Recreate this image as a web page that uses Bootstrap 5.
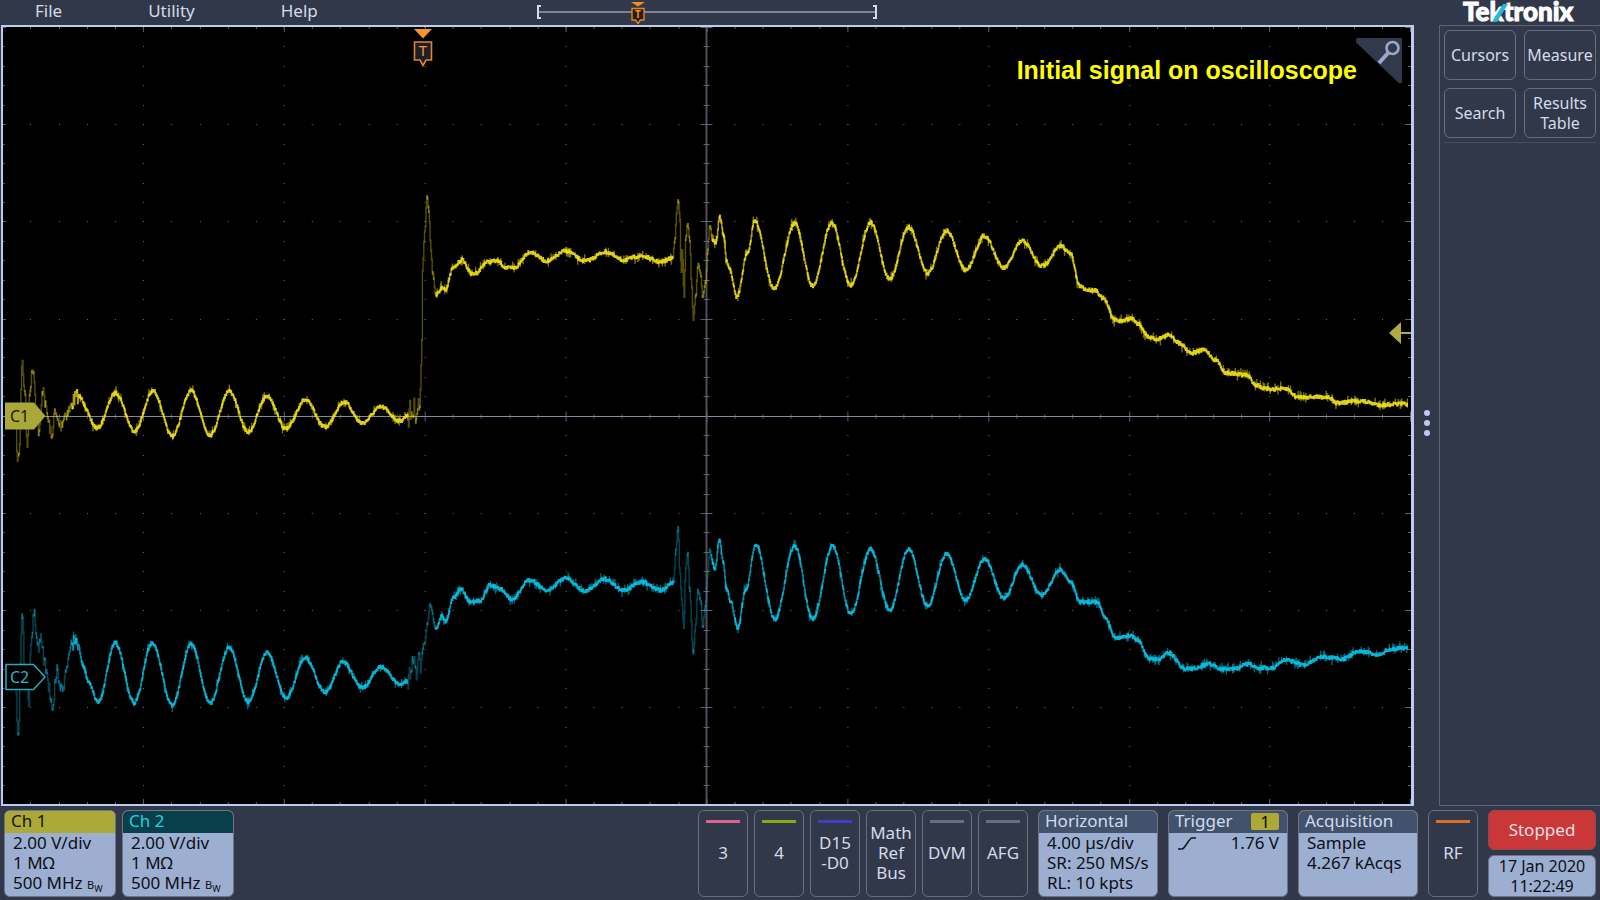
<!DOCTYPE html>
<html lang="en">
<head>
<meta charset="utf-8">
<meta name="viewport" content="width=device-width, initial-scale=1">
<title>Tektronix oscilloscope</title>
<link href="https://cdn.jsdelivr.net/npm/bootstrap@5.3.0/dist/css/bootstrap.min.css" rel="stylesheet">
<style>
  :root { --panel:#31384a; --line:#5d6473; --ink:#d3dbea; --frame:#bccaec; --face:#9dafd0; --head:#43526c; --olive:#aca938; }
  body { background:var(--panel); color:var(--ink); font-family:"Noto Sans","Open Sans",sans-serif; font-size:17px; line-height:20px; }
  button { font:inherit; color:inherit; background:none; border:0; padding:0; }
  .menu-bar { height:25px; }
  .menu-bar button { font-size:17px; line-height:22px; }
  .menus { flex:1 1 0; gap:86px; }
  .menus button:first-child { margin-left:35px; }
  .record-view { width:24%; }
  .record-line { height:2px; margin-top:11px; background:#7d8498; }
  .bracket { top:5px; width:4px; height:14px; border:1px solid var(--ink); border-width:2px 0 2px 2px; }
  .bracket.last { border-width:2px 2px 2px 0; }
  .scope { background:#000; border:2px solid var(--frame); border-right-width:3px; margin-left:1px; }
  .trace-title { right:54px; top:27px; color:#ff0; font:bold 25px/32px "Liberation Sans",Arial,sans-serif; }
  .zoom-corner { right:8px; top:11px; }
  .over { position:absolute; }
  .center-x { transform:translateX(-50%); }
  .center-y { transform:translateY(-50%); }
  .splitter { width:25px; padding-top:40px; }
  .splitter i { width:6px; height:6px; border-radius:50%; background:#bccbee; }
  .side { width:161px; }
  .logo { height:25px; padding-left:24px; color:#fff; font:900 26px/23px Lato,"Open Sans",sans-serif; -webkit-text-stroke:1px #fff; }
  .side-panel { border:solid var(--line); border-width:1px 0 1px 1px; padding:4px 4px 0; }
  .side-grid { display:grid; grid-template-columns:1fr 1fr; gap:8px; padding-bottom:4px; border-bottom:1px solid #454c5c; }
  .tile { border:1px solid #686e7b; border-radius:6px; }
  .side-grid .tile { height:50px; font-size:16px; line-height:20px; }
  .footer-bar { gap:10px; padding:4px 4px 3px; height:94px; }
  .slot { width:50px; position:relative; padding-bottom:2px; white-space:nowrap; }
  .slot::before { content:""; position:absolute; left:7px; right:7px; top:9px; height:3px; background:var(--mark); }
  .readout { width:120px; background:var(--face); border:1px solid #6d7584; border-radius:6px; color:#0b1018; text-align:left; display:flex; flex-direction:column; overflow:hidden; white-space:nowrap; }
  .channel { width:112px; }
  .readout .title { height:22px; line-height:20px; padding:0 6px; background:var(--head); color:var(--ink); align-self:stretch; }
  .readout .lines { padding:0 8px; align-self:stretch; }
  .bw { font-size:11px; } .bw small { font-size:9px; position:relative; top:3px; }
  .src { width:28px; height:17px; line-height:17px; margin:2px 2px 0 0; text-align:center; background:var(--olive); color:#0b1018; border-radius:2px; }
  .run-state { height:40px; background:#c93739; border:1px solid #8d4a55; border-radius:6px; color:#f1dfe4; }
  .clock { height:42px; background:var(--face); border:1px solid #6d7584; border-radius:6px; color:#0b1018; text-align:center; line-height:20px; font-size:16px; }
  .status { width:108px; gap:5px; }
</style>
</head>
<body class="vh-100 d-flex flex-column overflow-hidden">
<div class="d-flex flex-fill" style="min-height:0">
  <main class="d-flex flex-column flex-fill">
    <header class="menu-bar d-flex">
      <nav class="menus d-flex align-items-start" aria-label="Main menu">
        <button type="button">File</button><button type="button">Utility</button><button type="button">Help</button>
      </nav>
      <div class="record-view position-relative">
        <div class="record-line"></div>
        <span class="over bracket start-0"></span><span class="over bracket last end-0"></span>
        <svg class="over center-x" style="left:29.7%;top:2px" width="14" height="22" viewBox="0 0 14 22" fill="none">
          <path d="M0 0H14L7 4.500Z" fill="#f68b1f"/><path d="M1 6.500H13V18H9.500L7 21.500 4.500 18H1Z" fill="#2b1c10" stroke="#e5851f" stroke-width="1.400"/>
          <text x="7" y="16" text-anchor="middle" font-size="10" font-weight="bold" fill="#e5902f">T</text>
        </svg>
      </div>
      <div style="flex:1 1 0"></div>
    </header>
    <section class="scope flex-fill position-relative" aria-label="Waveform view">
      <svg id="plot" class="over w-100 h-100" viewBox="3 27 1409 777" preserveAspectRatio="none" fill="none"></svg>
      <svg class="over center-x" style="left:29.8%;top:2px" width="20" height="40" viewBox="0 0 20 40" fill="none">
        <path d="M1 0H19L10 9.500Z" fill="#f9922b"/>
        <path d="M1.500 13H18.500V31H13L10 36.500 7 31H1.500Z" fill="#1d1e26" stroke="#df8530" stroke-width="1.600"/>
        <text x="10" y="27" text-anchor="middle" font-size="15" fill="#ee9440">T</text>
      </svg>
      <h1 class="over trace-title m-0">Initial signal on oscilloscope</h1>
      <button type="button" class="over zoom-corner" aria-label="Zoom">
        <svg class="d-block" width="47" height="46" viewBox="0 0 47 46" fill="none">
          <path d="M2 1H45V44Q43 45 41 42L1 4Q0 1 2 1Z" fill="#31394b" stroke="#31394b" stroke-width="2"/>
          <circle cx="36.500" cy="10" r="6" stroke="#9aa9cb" stroke-width="2.600"/><path d="M32 15L23 25" stroke="#9aa9cb" stroke-width="4"/>
        </svg>
      </button>
      <svg class="over center-y" style="left:2px;top:50.1%" width="42" height="28" viewBox="0 0 42 28"><path d="M0 .500H29L40.500 14 29 27.500H0Z" fill="#aba83a"/><text x="5" y="20" font-size="16" fill="#1a1a08">C1</text></svg>
      <svg class="over center-y" style="left:2px;top:83.7%" width="42" height="28" viewBox="0 0 42 28"><path d="M1 1.500H28.500L40 14 28.500 26.500H1Z" fill="#000" stroke="#2aa9b6" stroke-width="1.500"/><text x="5" y="20" font-size="16" fill="#2cb5c4">C2</text></svg>
      <svg class="over center-y end-0" style="top:39.4%" width="22" height="22" viewBox="0 0 22 22"><path d="M0 11L12 0V10H22V12H12V22Z" fill="#b0ab3e"/></svg>
    </section>
  </main>
  <div class="splitter d-flex flex-column align-items-center justify-content-center gap-1" aria-hidden="true"><i></i><i></i><i></i></div>
  <aside class="side d-flex flex-column">
    <div class="logo position-relative">Tektronix
      <svg class="over" style="left:53px;top:1px" width="18" height="22" viewBox="0 0 18 22"><path d="M0 21L11 3H16L5 21Z" fill="#27b5d8"/></svg>
    </div>
    <div class="side-panel flex-fill">
      <div class="side-grid">
        <button type="button" class="tile">Cursors</button><button type="button" class="tile">Measure</button>
        <button type="button" class="tile">Search</button><button type="button" class="tile">Results<br>Table</button>
      </div>
    </div>
  </aside>
</div>
<footer class="footer-bar d-flex">
  <div class="d-flex" style="gap:6px">
    <button type="button" class="readout channel"><span class="title" style="background:#aca938;color:#14140a">Ch 1</span><span class="lines">2.00 V/div<br>1 MΩ<br>500 MHz <span class="bw">B<small>W</small></span></span></button>
    <button type="button" class="readout channel"><span class="title" style="background:#083f4a;color:#22cfdc">Ch 2</span><span class="lines">2.00 V/div<br>1 MΩ<br>500 MHz <span class="bw">B<small>W</small></span></span></button>
  </div>
  <div class="d-flex ms-auto" style="gap:6px">
    <button type="button" class="tile slot" style="--mark:#dc628f">3</button>
    <button type="button" class="tile slot" style="--mark:#86a917">4</button>
    <button type="button" class="tile slot" style="--mark:#403fc4">D15<br>-D0</button>
    <button type="button" class="tile slot" style="--mark:transparent">Math<br>Ref<br>Bus</button>
    <button type="button" class="tile slot" style="--mark:#6a6e79">DVM</button>
    <button type="button" class="tile slot" style="--mark:#6a6e79">AFG</button>
  </div>
  <button type="button" class="readout"><span class="title">Horizontal</span><span class="lines">4.00 µs/div<br>SR: 250 MS/s<br>RL: 10 kpts</span></button>
  <button type="button" class="readout"><span class="title d-flex justify-content-between">Trigger<span class="src">1</span></span>
    <span class="lines d-flex justify-content-between"><svg width="20" height="20" viewBox="0 0 20 20" fill="none" stroke="#10151e" stroke-width="1.500"><path d="M1 16H5C8 16 12 5 15 5H19"/></svg><span>1.76 V</span></span></button>
  <button type="button" class="readout"><span class="title">Acquisition</span><span class="lines">Sample<br>4.267 kAcqs</span></button>
  <button type="button" class="tile slot" style="--mark:#d5702c">RF</button>
  <div class="status d-flex flex-column">
    <button type="button" class="run-state">Stopped</button>
    <div class="clock">17 Jan 2020<br>11:22:49</div>
  </div>
</footer>
<script src="https://cdn.jsdelivr.net/npm/bootstrap@5.3.0/dist/js/bootstrap.bundle.min.js"></script>
<script>
const plot = document.getElementById('plot');
function stroke(d, color, width, opacity) {
  const p = document.createElementNS('http://www.w3.org/2000/svg', 'path');
  p.setAttribute('d', d); p.setAttribute('stroke', color);
  p.setAttribute('stroke-width', width); p.setAttribute('stroke-opacity', opacity || 1);
  plot.appendChild(p);
}
// Graticule: 10 x 8 divisions, five minor steps in each.
const L = 3, T = 27, R = 1412, B = 804, DX = 140.9, DY = 97.2;
let dots = '', ticks = '';
for (let i = 0; i <= 50; i++) {
  const x = Math.round(2.3 + i * DX / 5), h = i % 5 ? 2 : 5;
  for (let r = 1; r < 8; r++) dots += `M${x} ${Math.round(T + r * DY)}.5h1`;
  ticks += `M${x + .5} ${T}v${h}M${x + .5} ${B}v${-h}M${x + .5} ${416.5 - h}v${2 * h}`;
}
for (let j = 0; j <= 40; j++) {
  const y = Math.round(T + j * DY / 5) + .5, w = j % 5 ? 3 : 6;
  for (let c = 1; c < 10; c++) dots += `M${Math.round(2.3 + c * DX)} ${y}h1`;
  ticks += `M${L} ${y}h${w / 2}M${R} ${y}h${-w}M${707 - w} ${y}h${2 * w}`;
}
stroke(dots, '#6b6d70', 1); stroke(ticks, '#74788a', 1, .8);
stroke('M3 416.5H1412', '#85889e', 1); stroke('M707 27V804', '#6a6a78', 2, .75);

// Pseudo-random source with a fixed seed keeps the trace noise stable.
let seed = 7;
const rnd = () => (seed = (seed * 16807) % 2147483647) / 2147483647;
const signals = {
 '#f5e614': [16,430,17.5,464,19,450,22,359,24,385,27.5,445,30,385,33,367,36,405,39,433,43,387,46,410,49,425,51.5,440,54,414,60,425,66,413,77.5,396,97,428,115.5,393,134.5,431,153,391,172,436,191,391,210,435,229,391,248,432,267,396,286,429,305,400,325,427,344,402,362,423,381,407,400,421,408,415,412,412,416,410,420,405,421.5,365,423,260,425,230,427,196,429,212,431,250,433,275,436,296,439,292,442,287,446,289,453,268,462,260,472,274,476,273,487,262,497,261,507,268,514,268,530,252,547,261,566,251,585,261,606,252,623,260,641,256,661,262,673,258,675,240,677,212,678.500,200,680,215,681.500,275,682.500,250,684.500,297,686,240,688,223,690,240,692,285,693.500,320,696,295,698.500,263,701,275,703,297,706,283,708,250,710,225,713,240,716,243,720,217,724,235,727,262,730,270,737,297,748,252,755,221,774.500,289,795,223,813,286,832,223,851,285,871,223,890,279,909,227,928,273,947,231,966,270,985,236,1004,268,1023,241,1042,266,1062,246,1071,254,1080,286,1088,290,1096,290,1103,298,1116,320,1121,321,1132,318,1139,324,1149,337,1157,339,1170,335,1180,343,1192,353,1205,350,1216,360,1227,373,1247,375,1257,385,1266,389,1287,389,1298,397,1329,397,1337,403,1360,401,1383,405,1395,404,1409,404],
 '#08c6ea': [15.500,690,18,730,22,620,25,675,29,700,31,640,34,616,38,645,41,640,44,660,47,680,52,704,57,672,62,690,67,665,72,643,77,643,83,665,88,682,98,702,115,643,134,703,152,643,172,705,191,644,210,703,229,648,248,702,267,653,286,698,305,658,325,692,343,662,362,688,381,667,400,684,408,681,413,669,420,665,424,645,428,622,430,604,436,629,442,616,446,622,453,598,461,589,470,602,480,601,490,585,500,589,512,599,530,580,547,590,566,578,585,591,605,579,623,590,642,582,661,590,674,582,676,550,678.500,526,680,570,682,600,684,627,686,570,688,553,690,590,693.500,654,696,625,698,590,701,600,703,628,706,605,708,575,710,550,713,562,715,569,720,540,723,560,727,590,731,602,738,628,746,590,756,545,775,619,795,546,813,619,833,546,851,614,871,549,890,610,909,549,928,606,947,554,966,600,985,559,1004,598,1023,565,1042,595,1061,570,1071,582,1081,602,1098,602,1105,617,1116,638,1132,636,1138,640,1150,659,1159,659,1169,653,1186,669,1197,668,1209,664,1222,669,1235,669,1248,664,1260,668,1272,668,1287,660,1304,665,1323,657,1342,659,1360,651,1379,655,1391,649,1409,648]
};
for (const [color, p] of Object.entries(signals)) {
  const ys = [];
  let k = 0;
  for (let x = p[0]; x <= 1409; x += .7) {
    while (k < p.length - 4 && x > p[k + 2]) k += 2;
    const t = (x - p[k]) / (p[k + 2] - p[k]);
    const burst = (x > 408 && x < 421) ? 26 : (x < 78 ? 14 : 3);
    ys.push([x, p[k + 1] + (p[k + 3] - p[k + 1]) * (1 - Math.cos(Math.PI * t)) / 2 + (rnd() - .5) * burst]);
  }
  const level = ['', '', '', ''];
  for (let i = 1; i < ys.length; i++) {
    const [x, y] = ys[i], prev = ys[i - 1][1], jump = Math.abs(y - prev);
    const n = (x < 72 || (x > 408 && x < 436) || (x > 674 && x < 712)) ? (jump > 5 ? 3 : 2) : (jump > 3.2 ? 1 : 0);
    level[n] += `M${x.toFixed(1)} ${(Math.min(y, prev) - 1.3).toFixed(1)}V${(Math.max(y, prev) + 1.3).toFixed(1)}`;
    if (n < 2 && rnd() > .8) level[2] += `M${x.toFixed(1)} ${(y - 3 - rnd() * 3).toFixed(1)}v${(6 + rnd() * 4).toFixed(1)}`;
  }
  [.9, .7, .5, .34].forEach((o, n) => stroke(level[n], color, 1.4, o));
}
</script>
</body>
</html>
